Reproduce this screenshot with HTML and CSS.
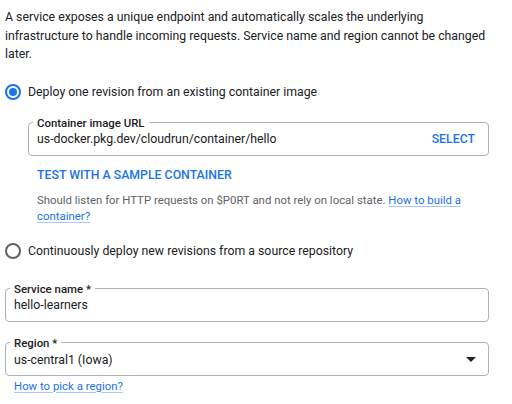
FILE: index.html
```html
<!DOCTYPE html>
<html>
<head>
<meta charset="utf-8">
<link rel="stylesheet" href="styles.css">
</head>
<body>
<div class="page">
  <p class="intro">A service exposes a unique endpoint and automatically scales the underlying infrastructure to handle incoming requests. Service name and region cannot be changed later.</p>

  <div class="radio-row first">
    <span class="radio checked"></span>
    <span class="radio-label">Deploy one revision from an existing container image</span>
  </div>

  <div class="indent">
    <fieldset class="field container-field">
      <legend>Container image URL</legend>
      <div class="field-row">
        <span class="value">us-docker.pkg.dev/cloudrun/container/hello</span>
        <span class="select-btn">SELECT</span>
      </div>
    </fieldset>
    <div class="test-link">TEST WITH A SAMPLE CONTAINER</div>
    <div class="help">Should listen for HTTP requests on $P0RT and not rely on local state. <a class="link">How to build a container?</a></div>
  </div>

  <div class="radio-row second">
    <span class="radio"></span>
    <span class="radio-label">Continuously deploy new revisions from a source repository</span>
  </div>

  <fieldset class="field service-field">
    <legend>Service name *</legend>
    <div class="field-row">
      <span class="value">hello-learners</span>
    </div>
  </fieldset>

  <fieldset class="field region-field">
    <legend>Region *</legend>
    <div class="field-row">
      <span class="value">us-central1 (Iowa)</span>
      <span class="caret"></span>
    </div>
  </fieldset>
  <div class="region-help"><a class="link">How to pick a region?</a></div>
</div>
</body>
</html>
```
FILE: styles.css
```css
html, body {
  margin: 0;
  padding: 0;
  background: #ffffff;
}
.page {
  font-family: Roboto, "Liberation Sans", Arial, sans-serif;
  font-size: 12.3px;
  color: #202124;
  padding: 8px 23px 0 5px;
  width: 484px;
}
.intro {
  margin: 0;
  line-height: 18.5px;
}
.radio-row {
  display: flex;
  align-items: center;
  height: 20px;
  line-height: 20px;
}
.radio-row.first { margin-top: 18px; }
.radio-row.second { margin-top: 17px; }
.radio {
  box-sizing: border-box;
  width: 16px;
  height: 16px;
  border-radius: 50%;
  border: 2px solid #5f6368;
  margin-right: 7px;
  display: flex;
  align-items: center;
  justify-content: center;
  flex: none;
}
.radio.checked {
  border-color: #1a73e8;
}
.radio.checked::after {
  content: "";
  width: 8px;
  height: 8px;
  border-radius: 50%;
  background: #1a73e8;
}
.indent {
  padding-left: 23px;
}
.field {
  margin: 0;
  min-width: 0;
  border: 1px solid #aeb1b5;
  border-radius: 4px;
  padding: 0 8px 7px 8px;
}
.field legend {
  font-size: 11.4px;
  font-weight: 500;
  line-height: 14px;
  padding: 0 4px;
  margin-left: -4px;
  color: #202124;
}
.field-row {
  display: flex;
  align-items: center;
  justify-content: space-between;
  line-height: 18px;
}
.container-field {
  margin-top: 14px;
  padding-right: 13px;
}
.select-btn {
  color: #1a73e8;
  font-weight: 500;
}
.test-link {
  margin-top: 10px;
  padding-left: 9px;
  line-height: 18px;
  color: #1a73e8;
  font-weight: 500;
}
.help {
  margin-top: 8px;
  padding-left: 9px;
  font-size: 11.4px;
  line-height: 16px;
  color: #5f6368;
}
.link {
  color: #1a73e8;
  text-decoration: underline;
  text-decoration-color: #a8c7fa;
  text-underline-offset: 2px;
}
.service-field {
  margin-top: 21px;
}
.region-field {
  margin-top: 14px;
  padding-bottom: 6px;
  padding-right: 12px;
}
.region-field .field-row {
  padding-top: 1px;
}
.caret {
  width: 0;
  height: 0;
  border-left: 5px solid transparent;
  border-right: 5px solid transparent;
  border-top: 5px solid #202124;
}
.region-help {
  margin-top: 2px;
  padding-left: 9px;
  font-size: 11.4px;
  line-height: 16px;
}
```
